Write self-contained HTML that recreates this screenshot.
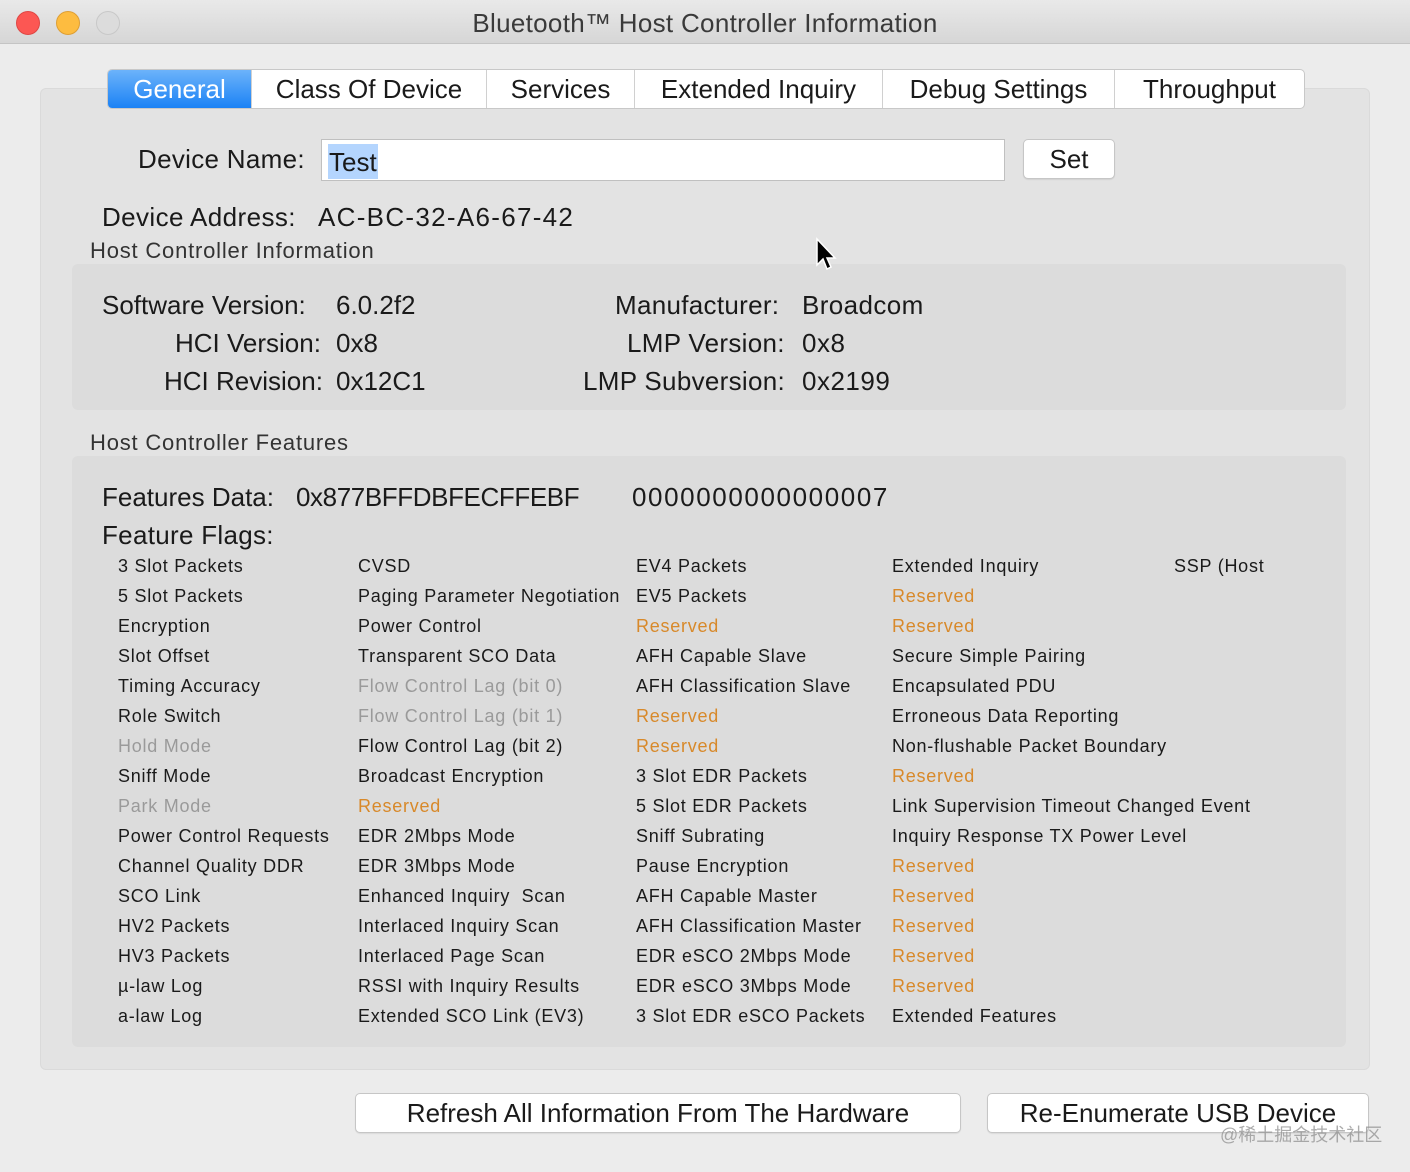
<!DOCTYPE html>
<html><head><meta charset="utf-8"><style>
*{margin:0;padding:0;box-sizing:border-box}
body{width:1410px;height:1172px;background:#ececec;font-family:"Liberation Sans","Noto Sans CJK SC",sans-serif;color:#1a1a1a;position:relative;overflow:hidden}
.a{position:absolute;white-space:nowrap}
.tb{position:absolute;left:0;top:0;width:1410px;height:44px;background:linear-gradient(#e9e9e9,#d6d6d6);border-bottom:1px solid #c4c4c4}
.dot{position:absolute;top:11px;width:24px;height:24px;border-radius:50%}
.box{position:absolute;border-radius:6px}
.tabs{position:absolute;left:107px;top:69px;height:40px;width:1198px;background:#fff;border:1px solid #c8c8c8;border-radius:5px;display:flex;font-size:26px;overflow:hidden}
.tabs div{border-right:1px solid #d0d0d0;line-height:38px;text-align:center}
.big{font-size:26px}
.col{position:absolute;top:551px;font-size:18px;line-height:30px;letter-spacing:.75px}
.g{color:#9a9a9a}.o{color:#d8892a}
.hd{font-size:22px;color:#333;letter-spacing:.8px}
.btn{position:absolute;background:#fff;border:1px solid #c6c6c6;border-radius:5px;text-align:center;font-size:26px;box-shadow:0 1px 1px rgba(0,0,0,.08)}
</style></head><body>
<div class="tb">
<div class="dot" style="left:16px;background:#fc5753;border:1px solid #df4744"></div>
<div class="dot" style="left:56px;background:#fdbc40;border:1px solid #de9f34"></div>
<div class="dot" style="left:96px;background:#dcdcdc;border:1px solid #c8c8c8"></div>
<div class="a" style="left:0;width:1410px;text-align:center;top:8px;font-size:26px;color:#3a3a3a;letter-spacing:.3px">Bluetooth™ Host Controller Information</div>
</div>
<div class="box" style="left:40px;top:88px;width:1330px;height:982px;background:#e3e3e3;border:1px solid #dadada"></div>
<div class="tabs">
<div style="width:144px;background:linear-gradient(#6cb3fa,#1b82f5);color:#fff">General</div>
<div style="width:235px">Class Of Device</div>
<div style="width:148px">Services</div>
<div style="width:248px">Extended Inquiry</div>
<div style="width:232px">Debug Settings</div>
<div style="flex:1;border:none">Throughput</div>
</div>
<div class="a big" style="left:138px;top:144px;letter-spacing:.3px">Device Name:</div>
<div class="a" style="left:321px;top:139px;width:684px;height:42px;background:#fff;border:1px solid #c0c0c0"></div>
<div class="a big" style="left:328px;top:144px;height:35px;background:#b4d5fe;padding:2px 1px 0;line-height:32px">Test</div>
<div class="btn" style="left:1023px;top:139px;width:92px;height:40px;line-height:38px">Set</div>
<div class="a big" style="left:102px;top:202px;letter-spacing:.4px">Device Address:</div>
<div class="a big" style="left:318px;top:202px;letter-spacing:1.3px">AC-BC-32-A6-67-42</div>
<div class="a hd" style="left:90px;top:238px">Host Controller Information</div>
<div class="box" style="left:72px;top:264px;width:1274px;height:146px;background:#dcdcdc"></div>
<div class="a big" style="left:102px;top:290px">Software Version:</div>
<div class="a big" style="left:336px;top:290px">6.0.2f2</div>
<div class="a big" style="left:175px;top:328px">HCI Version:</div>
<div class="a big" style="left:336px;top:328px">0x8</div>
<div class="a big" style="left:164px;top:366px">HCI Revision:</div>
<div class="a big" style="left:336px;top:366px">0x12C1</div>
<div class="a big" style="left:615px;top:290px;letter-spacing:.3px">Manufacturer:</div>
<div class="a big" style="left:802px;top:290px;letter-spacing:.4px">Broadcom</div>
<div class="a big" style="left:627px;top:328px;letter-spacing:.3px">LMP Version:</div>
<div class="a big" style="left:802px;top:328px;letter-spacing:.5px">0x8</div>
<div class="a big" style="left:583px;top:366px;letter-spacing:.3px">LMP Subversion:</div>
<div class="a big" style="left:802px;top:366px;letter-spacing:.5px">0x2199</div>
<div class="a hd" style="left:90px;top:430px">Host Controller Features</div>
<div class="box" style="left:72px;top:456px;width:1274px;height:591px;background:#dcdcdc"></div>
<div class="a big" style="left:102px;top:482px">Features Data:</div>
<div class="a big" style="left:296px;top:482px;letter-spacing:-.4px">0x877BFFDBFECFFEBF</div>
<div class="a big" style="left:632px;top:482px;letter-spacing:1.6px">0000000000000007</div>
<div class="a big" style="left:102px;top:520px;letter-spacing:.3px">Feature Flags:</div>
<div class="col" style="left:118px">3 Slot Packets<br>5 Slot Packets<br>Encryption<br>Slot Offset<br>Timing Accuracy<br>Role Switch<br><span class="g">Hold Mode</span><br>Sniff Mode<br><span class="g">Park Mode</span><br>Power Control Requests<br>Channel Quality DDR<br>SCO Link<br>HV2 Packets<br>HV3 Packets<br>µ-law Log<br>a-law Log</div>
<div class="col" style="left:358px">CVSD<br>Paging Parameter Negotiation<br>Power Control<br>Transparent SCO Data<br><span class="g">Flow Control Lag (bit 0)</span><br><span class="g">Flow Control Lag (bit 1)</span><br>Flow Control Lag (bit 2)<br>Broadcast Encryption<br><span class="o">Reserved</span><br>EDR 2Mbps Mode<br>EDR 3Mbps Mode<br>Enhanced Inquiry&nbsp; Scan<br>Interlaced Inquiry Scan<br>Interlaced Page Scan<br>RSSI with Inquiry Results<br>Extended SCO Link (EV3)</div>
<div class="col" style="left:636px">EV4 Packets<br>EV5 Packets<br><span class="o">Reserved</span><br>AFH Capable Slave<br>AFH Classification Slave<br><span class="o">Reserved</span><br><span class="o">Reserved</span><br>3 Slot EDR Packets<br>5 Slot EDR Packets<br>Sniff Subrating<br>Pause Encryption<br>AFH Capable Master<br>AFH Classification Master<br>EDR eSCO 2Mbps Mode<br>EDR eSCO 3Mbps Mode<br>3 Slot EDR eSCO Packets</div>
<div class="col" style="left:892px">Extended Inquiry<br><span class="o">Reserved</span><br><span class="o">Reserved</span><br>Secure Simple Pairing<br>Encapsulated PDU<br>Erroneous Data Reporting<br>Non-flushable Packet Boundary<br><span class="o">Reserved</span><br>Link Supervision Timeout Changed Event<br>Inquiry Response TX Power Level<br><span class="o">Reserved</span><br><span class="o">Reserved</span><br><span class="o">Reserved</span><br><span class="o">Reserved</span><br><span class="o">Reserved</span><br>Extended Features</div>
<div class="col" style="left:1174px">SSP (Host</div>
<div class="btn" style="left:355px;top:1093px;width:606px;height:40px;line-height:38px">Refresh All Information From The Hardware</div>
<div class="btn" style="left:987px;top:1093px;width:382px;height:40px;line-height:38px">Re-Enumerate USB Device</div>
<div class="a" style="left:1220px;top:1121px;font-size:18px;color:rgba(150,150,150,.8)">@稀土掘金技术社区</div>
<svg class="a" style="left:815px;top:237px" width="24" height="36" viewBox="0 0 24 36"><path d="M2 2 L2 28 L8 22 L12 32 L16 30 L12 21 L20 21 Z" fill="#000" stroke="#fff" stroke-width="1.5"/></svg>
</body></html>
